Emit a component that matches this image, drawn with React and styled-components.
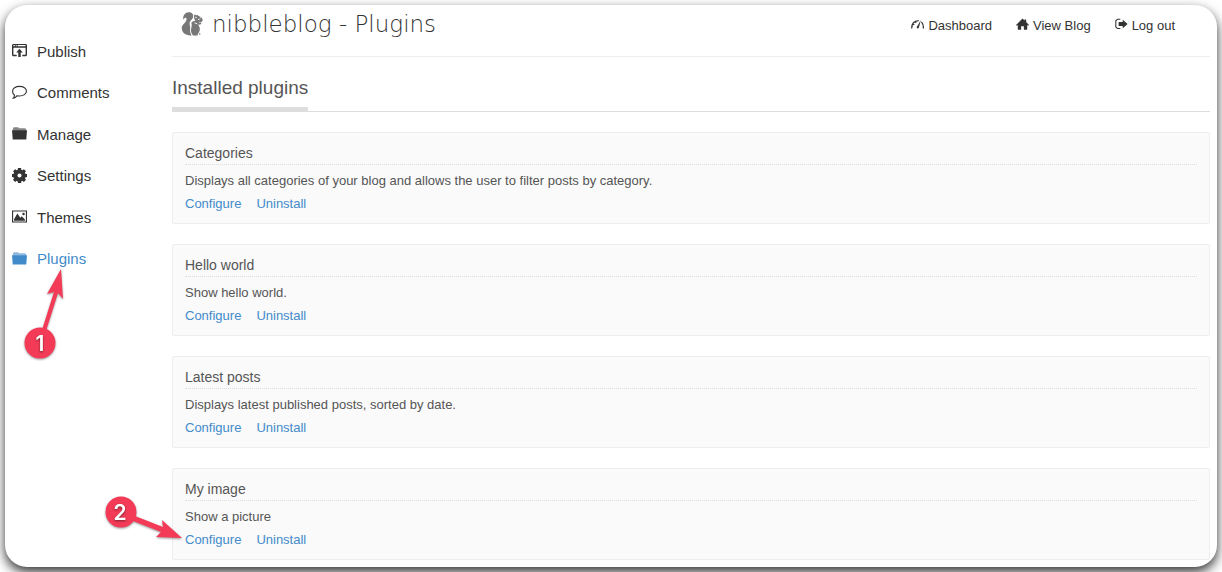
import React from "react";
import styled, { createGlobalStyle } from "styled-components";

const GlobalStyle = createGlobalStyle`
  * { box-sizing: border-box; }
  body {
    margin: 0;
    background: #fff;
    color: #555;
    font: 13px/20px "Liberation Sans", Arial, sans-serif;
  }
  h1, h2, h3, p, ul { margin: 0; padding: 0; font-weight: normal; }
  ul { list-style: none; }
  a { color: #428bca; text-decoration: none; }
`;

const Backdrop = styled.div`
  display: flex;
  min-height: 100vh;
  padding: 5px;
  overflow: hidden;
`;

const Frame = styled.div`
  position: relative;
  display: flex;
  flex: 1;
  padding: 0 7px 7px;
  border-radius: 22px;
  background: #fff;
  box-shadow: 0 5px 12px rgba(0, 0, 0, 0.8);
`;

const Sidebar = styled.nav`
  flex: 0 0 160px;
  padding-top: 26px;
`;

const Menu = styled.ul`
  display: grid;
  grid-auto-rows: 1fr;
  height: 249px;
`;

const MenuLink = styled.a`
  display: flex;
  align-items: center;
  gap: 10px;
  height: 100%;
  font-size: 15px;
  color: ${(p) => (p.$active ? "#428bca" : "#333")};

  svg { margin-bottom: 2px; }
`;

const Icon = styled.svg`
  display: block;
  flex: none;
  width: ${(p) => p.$size}px;
  height: ${(p) => p.$size}px;
  fill: currentColor;
`;

const Main = styled.main`
  flex: 1;
  min-width: 0;
`;

const Header = styled.header`
  display: flex;
  justify-content: space-between;
  height: 52px;
  padding: 0 35px 0 9px;
  border-bottom: 1px solid #eee;
`;

const Brand = styled.div`
  display: flex;
  align-items: flex-start;
  gap: 7px;

  svg { margin-top: 7px; }
`;

const Title = styled.h1`
  font: 200 23px/38px "DejaVu Sans", "DejaVu Sans Light", sans-serif;
  color: #333;
`;

const TopLinks = styled.nav`
  display: flex;
  align-items: flex-start;
  gap: 24px;
  padding-top: 11px;
`;

const TopLink = styled.a`
  display: flex;
  gap: 4px;
  color: #333;

  svg { margin-top: 2px; }
`;

const SectionBar = styled.div`
  display: flex;
  margin: 17px 0 20px;
  border-bottom: 1px solid #ddd;
`;

const SectionTitle = styled.h2`
  padding-bottom: 5px;
  border-bottom: 4px solid #ddd;
  font-size: 19px;
  line-height: 28px;
`;

const PluginList = styled.div`
  display: grid;
  gap: 20px;
`;

const Card = styled.article`
  padding: 10px 12px 9px;
  border: 1px solid #eee;
  border-radius: 2px;
  background: #fafafa;
`;

const CardTitle = styled.h3`
  padding-bottom: 1px;
  border-bottom: 1px dotted #ddd;
  font-size: 14px;
  line-height: 20px;
`;

const Description = styled.p`
  padding: 6px 0 3px;
`;

const Actions = styled.div`
  display: flex;
  gap: 15px;
`;

const Callout = styled.svg`
  position: absolute;
  left: ${(p) => p.$x}px;
  top: ${(p) => p.$y}px;
  overflow: visible;
  pointer-events: none;
  fill: #f33b57;
  filter: drop-shadow(0 1px 1px rgba(0, 0, 0, 0.4));

  text {
    fill: #fff;
    font: 600 21px Inter, sans-serif;
    text-anchor: middle;
    filter: drop-shadow(0 1px 1px rgba(0, 0, 0, 0.5));
  }
`;

const shapes = {
  publish: (
    <>
      <path fillRule="evenodd" d="M1 1h14l1 1v11l-1 1h-4v-1.500h3.500V5h-13v7.500H5V14H1l-1-1V2zM1.500 2.200v1.300H3V2.200zM4 2.200v1.300h1V2.200zM6 2.200v1.300h8.500V2.200z" />
      <path d="M8 6l3.500 4H9.300v5H6.700v-5H4.500z" />
    </>
  ),
  comments: (
    <path fill="none" stroke="currentColor" strokeWidth="1.200" d="M8 1.500c4.200 0 7.400 2.200 7.400 5.100S12.200 11.700 8 11.700c-.9 0-1.700-.1-2.500-.3C4.400 12.900 3 14 1.300 14.100c.8-.8 1.300-1.900 1.400-3.200C1.400 9.900.6 8.400.6 6.700.6 3.700 3.800 1.500 8 1.500z" />
  ),
  folder: (
    <>
      <path opacity=".6" d="M1 4V2.500L2 1.400h4.500l1 1H14l1 1V5H1z" />
      <path d="M0 4.500h16L15.200 14.500H.8z" />
    </>
  ),
  settings: (
    <path fillRule="evenodd" d="M6.300 0h3.400l.3 2 .9.4L12.700 1.200 14.900 3.400 13.700 5.100l.4.9 1.900.3v3.400l-1.900.3-.4.9 1.200 1.700-2.200 2.200-1.800-1.200-.9.4-.3 2H6.300l-.3-2-.9-.4-1.800 1.200-2.200-2.200 1.200-1.700-.4-.9L0 9.700V6.300L1.900 6l.4-.9L1.100 3.400l2.200-2.200 1.800 1.200.9-.4zM8 5.800a2.200 2.200 0 1 0 0 4.400 2.200 2.200 0 0 0 0-4.400z" />
  ),
  themes: (
    <>
      <path fillRule="evenodd" d="M0 1.500h16v13H0zM1.200 2.700v10.600h13.600V2.700z" />
      <path d="M2.200 12.400V11l3.500-6.200 3.200 4.500 1.500-1.600 3.400 3.500v1.200z" />
      <circle cx="12.300" cy="5.300" r="1.300" />
    </>
  ),
  dashboard: (
    <>
      <path fill="none" stroke="currentColor" strokeWidth="1.500" d="M.8 13C.8 7.200 4 3.500 9.500 3.300M12.900 4.800c1.600 1.600 2.400 4.400 2.400 8.200M2.500 7l1.500 1.200M5.200 4.500l1 1.500" />
      <path d="M12.200 2.500L9.600 12c-.6 1.500-3.100.7-2.500-.9z" />
    </>
  ),
  home: <path d="M8 .5l2.500 2.500V1.700h2V5L16 8.500l-1 1-1.200-.8v5.800H9.700v-4.300H6.300v4.300H2.200V8.700L1 9.500l-1-1z" />,
  logout: (
    <>
      <path fill="none" stroke="currentColor" strokeWidth="1.300" d="M6.500 1.500H3.200L1 3.500v7.500l2.200 2h3.300" />
      <path d="M9.500 2L15.500 7.300 9.500 12.600v-2.900H4.500V5h5z" />
    </>
  ),
};

function Glyph({ name, size }) {
  return (
    <Icon viewBox="0 0 16 16" $size={size} aria-hidden="true">
      {shapes[name]}
    </Icon>
  );
}

function Squirrel() {
  return (
    <Icon viewBox="0 0 24 24" $size={24} color="#777" aria-hidden="true">
      <path d="M2.300 8C1.600 3.500 4.200.3 7.800.3c3 0 4.800 2 4.300 4.700-.3 1.700-1.500 2.700-2.500 3.800-1.300 1.500-1.200 3-.7 4.700.5 2 .2 3.500.2 5.500 0 1.700.7 3 1.500 4.400C5.200 24 1 21 .8 16.600.6 13.400 2.800 12 4.300 10.200 6 8 6 6 4.800 5.800 3.500 5.600 2.800 6.600 2.300 8z" />
      <path d="M10.300 10.800c1-1.300 2.500-1.900 4.200-2-1.200-1.200-1.700-3-1.400-4.700l.3-1.900 1.800 1 1.700-.2.500 1c2.300.4 3.800 1.700 4.400 3.900-.4 1.500-1.600 2.200-3.400 2.200l-.9.900 2-.7 1 1.300-1.500 1.200-2-.3c1.600 1.800 2.200 4 1.600 6.200-.4 1.600-1.200 2.700-2.100 3.500l.4 1.300H12c-1.600-2-2.300-4-1.900-6.300.3-2.300 1.100-4.100.2-6.400z" />
      <path fill="none" stroke="#fff" strokeWidth=".9" d="M14.300 5.200l1.600.6M17 7.200l1.500.8M13.500 10.800l2.700 1M19.500 5.300l-.6 1.300" />
      <circle cx="18.700" cy="22" r=".8" />
    </Icon>
  );
}

const menu = [
  ["publish", "Publish"],
  ["comments", "Comments"],
  ["folder", "Manage"],
  ["settings", "Settings"],
  ["themes", "Themes"],
  ["folder", "Plugins"],
];

const topLinks = [
  ["dashboard", "Dashboard"],
  ["home", "View Blog"],
  ["logout", "Log out"],
];

const plugins = [
  ["Categories", "Displays all categories of your blog and allows the user to filter posts by category."],
  ["Hello world", "Show hello world."],
  ["Latest posts", "Displays latest published posts, sorted by date."],
  ["My image", "Show a picture"],
];

export default function App() {
  return (
    <Backdrop>
      <GlobalStyle />
      <Frame>
        <Sidebar aria-label="Admin">
          <Menu>
            {menu.map(([icon, label]) => (
              <li key={label}>
                <MenuLink href="#" $active={label === "Plugins"}>
                  <Glyph name={icon} size={15} />
                  {label}
                </MenuLink>
              </li>
            ))}
          </Menu>
        </Sidebar>
        <Main>
          <Header>
            <Brand>
              <Squirrel />
              <Title>nibbleblog - Plugins</Title>
            </Brand>
            <TopLinks aria-label="Account">
              {topLinks.map(([icon, label]) => (
                <TopLink href="#" key={label}>
                  <Glyph name={icon} size={13} />
                  {label}
                </TopLink>
              ))}
            </TopLinks>
          </Header>
          <SectionBar>
            <SectionTitle>Installed plugins</SectionTitle>
          </SectionBar>
          <PluginList>
            {plugins.map(([name, description]) => (
              <Card key={name}>
                <CardTitle>{name}</CardTitle>
                <Description>{description}</Description>
                <Actions>
                  <a href="#">Configure</a>
                  <a href="#">Uninstall</a>
                </Actions>
              </Card>
            ))}
          </PluginList>
        </Main>
        <Callout $x={19} $y={263} width="40" height="92">
          <path d="M18 62L30 24L23 26L37 1L39 31L34 25L22 63z" />
          <circle cx="16" cy="75" r="15.500" />
          <text x="16" y="83">1</text>
        </Callout>
        <Callout $x={100} $y={491} width="78" height="42">
          <path d="M30 20L58 31L57 24L77 42L51 41L56 36L28 25z" />
          <circle cx="16" cy="16" r="15.500" />
          <text x="15" y="24">2</text>
        </Callout>
      </Frame>
    </Backdrop>
  );
}
